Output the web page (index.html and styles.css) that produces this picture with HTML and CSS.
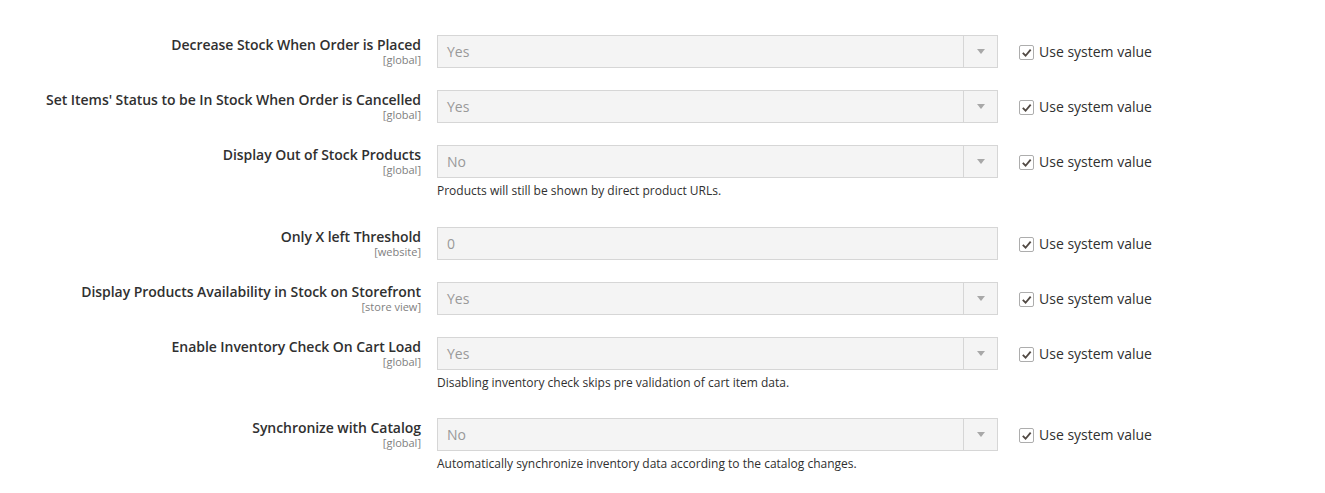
FILE: index.html
```html
<!DOCTYPE html>
<html lang="en">
<head>
    <meta charset="UTF-8">
    <title>Inventory - Stock Options</title>
    <link rel="stylesheet" href="styles.css">
</head>
<body>
    <div class="config">

        <div class="row">
            <div class="label">Decrease Stock When Order is Placed<span class="scope">[global]</span></div>
            <div class="control">
                <div class="select"><span class="value">Yes</span><span class="arrow"></span></div>
            </div>
            <label class="inherit"><span class="box"><svg viewBox="0 0 14 14"><polyline points="3,7.5 6,10.5 11.5,4"/></svg></span>Use system value</label>
        </div>

        <div class="row">
            <div class="label">Set Items' Status to be In Stock When Order is Cancelled<span class="scope">[global]</span></div>
            <div class="control">
                <div class="select"><span class="value">Yes</span><span class="arrow"></span></div>
            </div>
            <label class="inherit"><span class="box"><svg viewBox="0 0 14 14"><polyline points="3,7.5 6,10.5 11.5,4"/></svg></span>Use system value</label>
        </div>

        <div class="row">
            <div class="label">Display Out of Stock Products<span class="scope">[global]</span></div>
            <div class="control">
                <div class="select"><span class="value">No</span><span class="arrow"></span></div>
                <p class="note">Products will still be shown by direct product URLs.</p>
            </div>
            <label class="inherit"><span class="box"><svg viewBox="0 0 14 14"><polyline points="3,7.5 6,10.5 11.5,4"/></svg></span>Use system value</label>
        </div>

        <div class="row">
            <div class="label">Only X left Threshold<span class="scope">[website]</span></div>
            <div class="control">
                <div class="select input"><span class="value">0</span></div>
            </div>
            <label class="inherit"><span class="box"><svg viewBox="0 0 14 14"><polyline points="3,7.5 6,10.5 11.5,4"/></svg></span>Use system value</label>
        </div>

        <div class="row">
            <div class="label">Display Products Availability in Stock on Storefront<span class="scope">[store view]</span></div>
            <div class="control">
                <div class="select"><span class="value">Yes</span><span class="arrow"></span></div>
            </div>
            <label class="inherit"><span class="box"><svg viewBox="0 0 14 14"><polyline points="3,7.5 6,10.5 11.5,4"/></svg></span>Use system value</label>
        </div>

        <div class="row">
            <div class="label">Enable Inventory Check On Cart Load<span class="scope">[global]</span></div>
            <div class="control">
                <div class="select"><span class="value">Yes</span><span class="arrow"></span></div>
                <p class="note">Disabling inventory check skips pre validation of cart item data.</p>
            </div>
            <label class="inherit"><span class="box"><svg viewBox="0 0 14 14"><polyline points="3,7.5 6,10.5 11.5,4"/></svg></span>Use system value</label>
        </div>

        <div class="row">
            <div class="label">Synchronize with Catalog<span class="scope">[global]</span></div>
            <div class="control">
                <div class="select"><span class="value">No</span><span class="arrow"></span></div>
                <p class="note">Automatically synchronize inventory data according to the catalog changes.</p>
            </div>
            <label class="inherit"><span class="box"><svg viewBox="0 0 14 14"><polyline points="3,7.5 6,10.5 11.5,4"/></svg></span>Use system value</label>
        </div>

    </div>
</body>
</html>
```

FILE: styles.css
```css
        body {
            margin: 0;
            padding: 0;
            font-family: 'Open Sans', 'Liberation Sans', Arial, sans-serif;
            background-color: #fff;
            color: #303030;
        }
        .config {
            padding-top: 35px;
        }
        .row {
            display: grid;
            grid-template-columns: 421px 561px auto;
            column-gap: 16px;
            margin-bottom: 22px;
        }
        .label {
            text-align: right;
            font-size: 14px;
            font-weight: 600;
            line-height: 17px;
            padding-top: 1px;
            letter-spacing: -0.05px;
            color: #303030;
        }
        .scope {
            display: block;
            font-size: 11px;
            font-weight: 400;
            line-height: 13px;
            letter-spacing: 0;
            color: #808080;
        }
        .select {
            box-sizing: border-box;
            height: 33px;
            display: flex;
            align-items: center;
            background-color: #f4f4f4;
            border: 1px solid #d6d6d6;
        }
        .select .value {
            flex: 1;
            padding-left: 9px;
            font-size: 14px;
            line-height: 19px;
            color: #999;
        }
        .arrow {
            width: 33px;
            height: 100%;
            border-left: 1px solid #d6d6d6;
            display: flex;
            align-items: center;
            justify-content: center;
        }
        .arrow::after {
            content: '';
            border-left: 4px solid transparent;
            border-right: 4px solid transparent;
            border-top: 5px solid #a8a8a8;
        }
        .note {
            margin: 5px 0 4.8px;
            font-size: 12px;
            line-height: 1.4;
            color: #303030;
        }
        .inherit {
            display: flex;
            align-items: center;
            height: 33px;
            padding-left: 5px;
            font-size: 14px;
            color: #303030;
        }
        .box {
            box-sizing: border-box;
            width: 15px;
            height: 15px;
            margin-right: 5px;
            margin-top: 2px;
            border: 1px solid #adadad;
            border-radius: 2px;
            background-color: #fff;
            display: flex;
        }
        .box svg {
            width: 13px;
            height: 13px;
            fill: none;
            stroke: #514943;
            stroke-width: 2;
        }
```
